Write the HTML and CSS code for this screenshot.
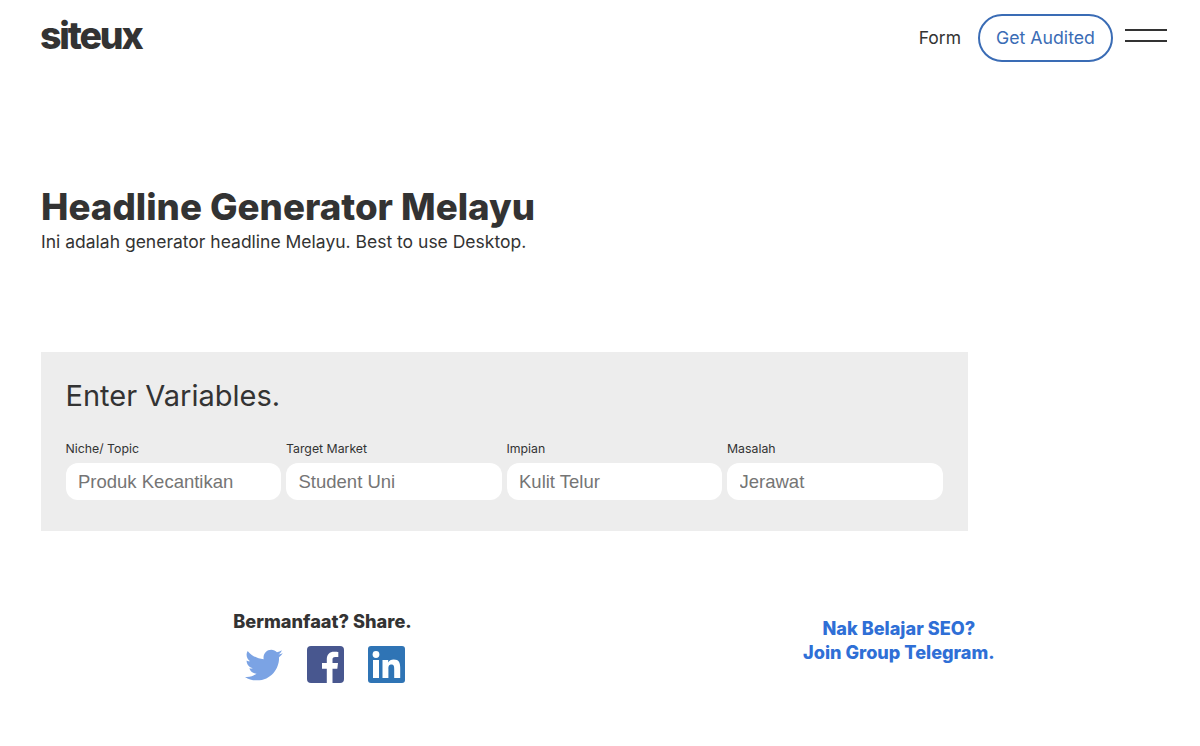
FILE: index.html
```html
<!DOCTYPE html>
<html lang="ms">
<head>
  <meta charset="UTF-8" />
  <meta name="viewport" content="width=device-width, initial-scale=1.0" />
  <title>Headline Generator Melayu</title>
  <link rel="stylesheet" href="styles.css">
</head>
<body>
  <!-- Top bar -->
  <header class="topbar">
    <a class="logo" href="#">siteux</a>
    <nav class="nav">
      <a class="nav-link" href="#">Form</a>
      <a class="nav-button" href="#">Get Audited</a>
      <button class="burger" aria-label="Menu"><span></span><span></span></button>
    </nav>
  </header>

  <main class="content">
    <section class="hero">
      <h1>Headline Generator Melayu</h1>
      <p>Ini adalah generator headline Melayu. Best to use Desktop.</p>
    </section>

    <!-- Variables form -->
    <section class="panel">
      <h2>Enter Variables.</h2>
      <div class="fields">
        <label class="field">Niche/ Topic
          <input type="text" placeholder="Produk Kecantikan">
        </label>
        <label class="field">Target Market
          <input type="text" placeholder="Student Uni">
        </label>
        <label class="field">Impian
          <input type="text" placeholder="Kulit Telur">
        </label>
        <label class="field">Masalah
          <input type="text" placeholder="Jerawat">
        </label>
      </div>
    </section>

    <section class="bottom">
      <div class="share">
        <h3>Bermanfaat? Share.</h3>
        <div class="icons">
          <a href="#" aria-label="Twitter">
            <svg width="38" height="38" viewBox="0 0 24 24"><path fill="#7ba3e4" d="M23.9 4.6c-.9.4-1.8.7-2.8.8 1-.6 1.8-1.6 2.2-2.7-1 .6-2 1-3.1 1.2C19.300 2.900 18 2.300 16.600 2.300c-2.700 0-4.900 2.200-4.900 4.900 0 .4 0 .8.100 1.100C7.700 8.100 4.100 6.100 1.700 3.100c-.4.700-.7 1.600-.7 2.500 0 1.700.9 3.200 2.200 4.100-.8 0-1.600-.2-2.200-.6v.1c0 2.400 1.700 4.400 3.900 4.800-.4.100-.8.200-1.300.2-.3 0-.6 0-.9-.1.600 2 2.400 3.400 4.600 3.400-1.700 1.300-3.800 2.100-6.100 2.100-.4 0-.8 0-1.200-.1 2.200 1.400 4.800 2.200 7.500 2.200 9.100 0 14-7.500 14-14v-.6c1-.7 1.800-1.600 2.400-2.500z"/></svg>
          </a>
          <a href="#" aria-label="Facebook">
            <svg width="37" height="37" viewBox="0 0 37 37"><rect width="37" height="37" rx="4" fill="#48578f"/><path fill="#fff" d="M25.500 37V22.700h4.800l.7-5.600h-5.500v-3.500c0-1.600.5-2.700 2.800-2.700h3V5.900c-.5-.1-2.300-.2-4.300-.2-4.300 0-7.200 2.600-7.200 7.300v4.100h-4.800v5.600h4.800V37z"/></svg>
          </a>
          <a href="#" aria-label="LinkedIn">
            <svg width="37" height="37" viewBox="0 0 37 37"><rect width="37" height="37" rx="3" fill="#2f74b5"/><rect x="5" y="14" width="6" height="18" fill="#fff"/><circle cx="8" cy="8.500" r="3.400" fill="#fff"/><path fill="#fff" d="M14.500 14h5.700v2.500c.9-1.600 2.800-2.900 5.500-2.900 5.400 0 6.500 3.500 6.500 8.200V32h-6v-9c0-2.200-.1-4.500-2.800-4.500s-3 2.200-3 4.400V32h-5.900z"/></svg>
          </a>
        </div>
      </div>
      <a class="telegram" href="#">Nak Belajar SEO?<br>Join Group Telegram.</a>
    </section>
  </main>
</body>
</html>
```

FILE: styles.css
```css
/* Reset and base */
* {
  margin: 0;
  padding: 0;
  box-sizing: border-box;
}
body {
  font-family: Inter, Arial, sans-serif;
  color: #333;
  background: #fff;
}
a {
  text-decoration: none;
}

/* Top bar */
.topbar {
  display: flex;
  justify-content: space-between;
  align-items: flex-start;
  padding: 14px 33px 0 40px;
  height: 186px;
}
.logo {
  font-size: 37.500px;
  font-weight: 800;
  letter-spacing: -2.200px;
  line-height: 44px;
  color: #333;
}
.nav {
  display: flex;
  align-items: flex-start;
}
.nav-link {
  font-size: 17.500px;
  line-height: 48px;
  color: #333;
  margin-right: 17px;
}
.nav-button {
  width: 135px;
  height: 48px;
  line-height: 44px;
  border: 2px solid #3a6cb5;
  border-radius: 24px;
  font-size: 17.700px;
  text-align: center;
  color: #3a6cb5;
  margin-right: 12px;
}
.burger {
  width: 42px;
  border: none;
  background: none;
  display: flex;
  flex-direction: column;
  gap: 9px;
  padding-top: 15px;
}
.burger span {
  display: block;
  height: 2px;
  background: #333;
}

/* Hero */
.content {
  padding: 0 41px;
}
.hero h1 {
  font-size: 36.700px;
  font-weight: 800;
  line-height: 41px;
  color: #333;
}
.hero p {
  font-size: 17.500px;
  line-height: 29px;
}

/* Variables panel */
.panel {
  width: 927px;
  height: 179px;
  margin-top: 96px;
  padding: 25px 24.500px 0;
  background: #ededed;
}
.panel h2 {
  font-size: 29px;
  font-weight: 400;
  line-height: 38px;
}
.fields {
  display: grid;
  grid-template-columns: repeat(4, 215.500px);
  column-gap: 5px;
  margin-top: 24px;
}
.field {
  font-size: 12.300px;
  line-height: 20px;
  display: block;
}
.field input {
  display: block;
  width: 100%;
  height: 37px;
  margin-top: 4px;
  padding: 0 12.500px;
  border: none;
  border-radius: 12px;
  background: #fff;
  font-family: "Liberation Sans", Arial, sans-serif;
  font-size: 18.500px;
}
.field input::placeholder {
  color: #757575;
}

/* Share and telegram row */
.bottom {
  display: flex;
  align-items: flex-start;
  margin-top: 78px;
}
.share {
  width: 563px;
  text-align: center;
}
.share h3 {
  font-size: 18.200px;
  font-weight: 800;
  line-height: 24px;
}
.icons {
  display: flex;
  justify-content: center;
  gap: 24px;
  margin-top: 13px;
  padding-left: 4px;
}
.telegram {
  margin-left: 199px;
  margin-top: 7px;
  font-size: 18.100px;
  font-weight: 800;
  line-height: 24px;
  text-align: center;
  color: #2f6fd6;
}
```
